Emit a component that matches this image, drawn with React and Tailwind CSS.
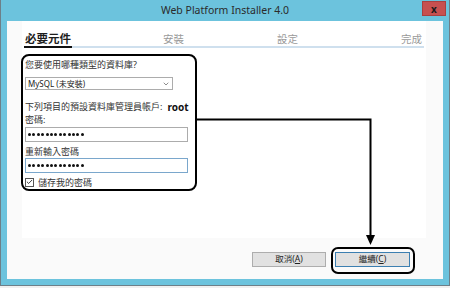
import { Check, ChevronDown } from 'lucide-react'

// ── Fonts ───────────────────────────────────────────────────────────────────
const UI_FONT = "font-['Noto_Sans','Noto_Sans_CJK_TC',sans-serif]"

const TABS = [
  { label: '必要元件', w: 'w-[138px]', active: true },
  { label: '安裝',     w: 'w-[114px]' },
  { label: '設定',     w: 'w-[124px]' },
  { label: '完成',     w: 'w-auto' },
]

const DOTS = Array.from({ length: 13 })

// ── Password field ──────────────────────────────────────────────────────────

function PasswordBox({ border }) {
  return (
    <div className={`h-[15px] border ${border} bg-white flex items-center px-[2px] gap-[1.4px]`}>
      {DOTS.map((_, i) => (
        <div key={i} className="w-[3px] h-[3px] rounded-full bg-[#111]" />
      ))}
    </div>
  )
}

// ── Main component ──────────────────────────────────────────────────────────

export default function App() {
  return (
    <div className={`relative w-[450px] h-[288px] bg-[#f0f0f0] overflow-hidden ${UI_FONT}`}>

      {/* ── Window frame ─────────────────────────────────── */}
      <div className="w-[450px] h-[286px] bg-[#6cc3dd] border border-t-0 border-[#6d7f88] flex flex-col">

        {/* Title bar */}
        <div className="relative h-[21px] flex items-center justify-center">
          <span className="text-[10.5px] text-[#2b2b2b] leading-none">Web Platform Installer 4.0</span>
          <div className="absolute right-[3px] top-[1px] w-[24px] h-[15px] bg-[#c75050] border border-[#a94040] flex items-center justify-center">
            <span className="text-[10px] font-bold text-[#1a1a1a] leading-none">x</span>
          </div>
        </div>

        {/* Client area */}
        <div className="flex-1 mx-[6px] mb-[6px] bg-[#fafafa] flex flex-col">

          {/* White panel */}
          <div className="ml-[15px] mr-[17px] h-[217px] bg-white pl-[3px] pr-[2px] pt-[8px]">

            {/* Step tabs */}
            <div className="flex h-[16px] items-center">
              {TABS.map(t => (
                <div key={t.label} className={t.w}>
                  <span className={t.active
                    ? 'text-[11.5px] font-bold text-[#1e1e1e] leading-none'
                    : 'text-[10.5px] text-[#9a9a9a] leading-none'}>
                    {t.label}
                  </span>
                </div>
              ))}
            </div>

            {/* Progress line */}
            <div className="mt-[1px] -ml-[1px] flex h-[2px]">
              <div className="w-[48px] bg-[#111]" />
              <div className="flex-1 bg-[#cfe0ee]" />
            </div>

            {/* Form */}
            <div className="mt-[11px] w-[163px] text-[9px] text-[#333]">
              <div className="h-[12px] leading-[12px]">您要使用哪種類型的資料庫?</div>

              <div className="mt-[6px] w-[148px] h-[13px] border border-[#acacac] bg-white flex items-center justify-between px-[2px]">
                <span className="text-[8px] leading-none text-[#222]">MySQL (未安裝)</span>
                <ChevronDown size={8} strokeWidth={2} className="text-[#555]" />
              </div>

              <div className="mt-[11px] h-[12px] leading-[12px] whitespace-nowrap flex">
                <span>下列項目的預設資料庫管理員帳戶:</span>
                <span className="ml-[5px] font-bold text-[10px] text-[#111]">root</span>
              </div>
              <div className="mt-[1px] h-[12px] leading-[12px]">密碼:</div>
              <div className="mt-[1px]">
                <PasswordBox border="border-[#acacac]" />
              </div>

              <div className="mt-[4px] h-[12px] leading-[12px]">重新輸入密碼</div>
              <PasswordBox border="border-[#7aa7cc]" />

              <div className="mt-[3px] h-[12px] flex items-center gap-[4px]">
                <div className="w-[9px] h-[9px] border border-[#555] bg-white flex items-center justify-center">
                  <Check size={8} strokeWidth={3} className="text-[#222]" />
                </div>
                <span className="leading-none">儲存我的密碼</span>
              </div>
            </div>
          </div>

          {/* Buttons */}
          <div className="mt-[14px] mr-[33px] flex justify-end gap-[9px]">
            <button className="w-[74px] h-[15px] bg-[#e1e1e1] border border-[#adadad] text-[8.5px] leading-none text-[#222]">
              取消(<span className="underline">A</span>)
            </button>
            <button className="w-[75px] h-[15px] bg-[#e1e1e1] border border-[#3c7fb1] text-[8.5px] leading-none text-[#222]">
              繼續(<span className="underline">C</span>)
            </button>
          </div>
        </div>
      </div>

      {/* ── Annotation overlay ───────────────────────────── */}
      <div className="absolute left-[21px] top-[54px] w-[176px] h-[137px] border-2 border-black rounded-[8px]" />
      <div className="absolute left-[331px] top-[247px] w-[84px] h-[27px] border-2 border-black rounded-[7px]" />
      <svg className="absolute left-0 top-0" width="450" height="288">
        <polyline points="196,119.5 370.5,119.5 370.5,236" fill="none" stroke="#000" strokeWidth="2" />
        <polygon points="366,235 375,235 370.5,245" fill="#000" />
      </svg>
    </div>
  )
}
